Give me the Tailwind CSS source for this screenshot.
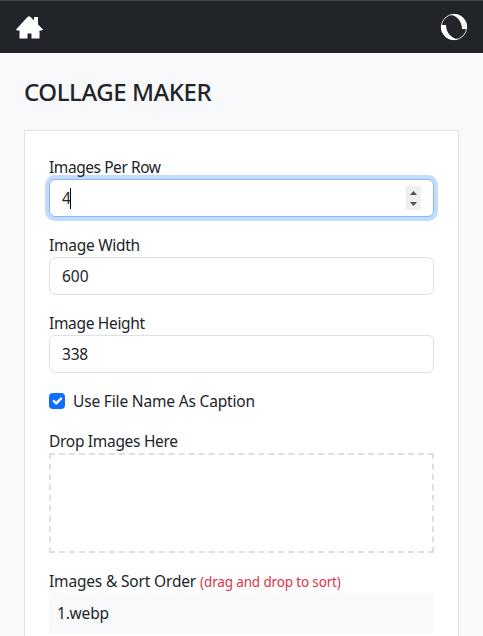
<!DOCTYPE html>
<html lang="en">
<head>
<meta charset="utf-8">
<title>Collage Maker</title>
<script src="https://cdn.jsdelivr.net/npm/@tailwindcss/browser@4"></script>
</head>
<body class="h-[636px] overflow-hidden bg-[#f8f9fa] font-['Noto_Sans',sans-serif] text-[15.5px] leading-6 text-[#212529]">
<header class="flex h-[53px] items-center justify-between border-t border-[#424649] bg-[#212529] pr-[15px] pl-4">
  <svg class="h-[23px] w-[27px]" viewBox="0 0 27 23" fill="#fff"><path d="M0 13.500 12 .5h2l4 4V1h4v7.500l5 5-1 1h-2.500V22.500h-8v-5h-4v5h-8v-8H1Z"/></svg>
  <svg class="h-7 w-7" viewBox="0 0 28 28"><circle cx="14" cy="14" r="12.700" fill="none" stroke="#fff" stroke-width=".8"/><path fill="#fff" d="M10 1.600A13 13 0 0 1 26.800 16H22C22 9 17.500 3 10 1.600ZM18 26.400A13 13 0 0 1 1.200 12H6C6 19 10.500 25 18 26.400Z"/></svg>
</header>
<main class="px-6 pt-6">
  <h1 class="flex h-[29px] items-center text-2xl font-medium tracking-[-0.45px]">COLLAGE MAKER</h1>
  <form class="mt-6 flex h-[520px] flex-col gap-4 border border-[#dee2e6] bg-white p-6">
    <div><label class="block tracking-[-0.43px]">Images Per Row</label>
      <div class="flex h-[38px] items-center justify-between rounded-md border border-[#86b7fe] bg-white px-3 shadow-[0_0_0_4px_#c2dbfe]">
        <div class="flex items-center"><span class="w-2">4</span><span class="h-[21px] w-px bg-black"></span></div>
        <svg class="h-6 w-[15px] bg-[#efefef]" viewBox="0 0 15 24" fill="#505050"><path d="M4 9h7L7.500 5ZM4 16h7l-3.500 4Z"/></svg>
      </div></div>
    <div><label class="block tracking-[-0.27px]">Image Width</label>
      <div class="flex h-[38px] items-center rounded-md border border-[#dee2e6] px-3">600</div></div>
    <div><label class="block tracking-[-0.32px]">Image Height</label>
      <div class="flex h-[38px] items-center rounded-md border border-[#dee2e6] px-3 tracking-[-0.2px]">338</div></div>
    <div class="flex h-6 items-center gap-2">
      <svg class="h-4 w-4 rounded bg-[#0d6efd]" viewBox="0 0 20 20"><path d="m6 10 3 3 6-6" fill="none" stroke="#fff" stroke-width="3" stroke-linecap="round" stroke-linejoin="round"/></svg>
      <span class="tracking-[-0.17px]">Use File Name As Caption</span></div>
    <div><label class="block tracking-[-0.3px]">Drop Images Here</label>
      <div class="h-[100px] border-2 border-dashed border-[#dfdfdf]"></div></div>
    <div><div class="flex h-6 items-center gap-1"><span class="tracking-[-0.17px]">Images &amp; Sort Order</span><span class="pt-px text-[13.5px] tracking-[-0.15px] text-[#dc3545]">(drag and drop to sort)</span></div>
      <div class="h-10 bg-[#f8f9fa] p-2 tracking-[-0.2px]">1.webp</div></div>
  </form>
</main>
</body>
</html>
